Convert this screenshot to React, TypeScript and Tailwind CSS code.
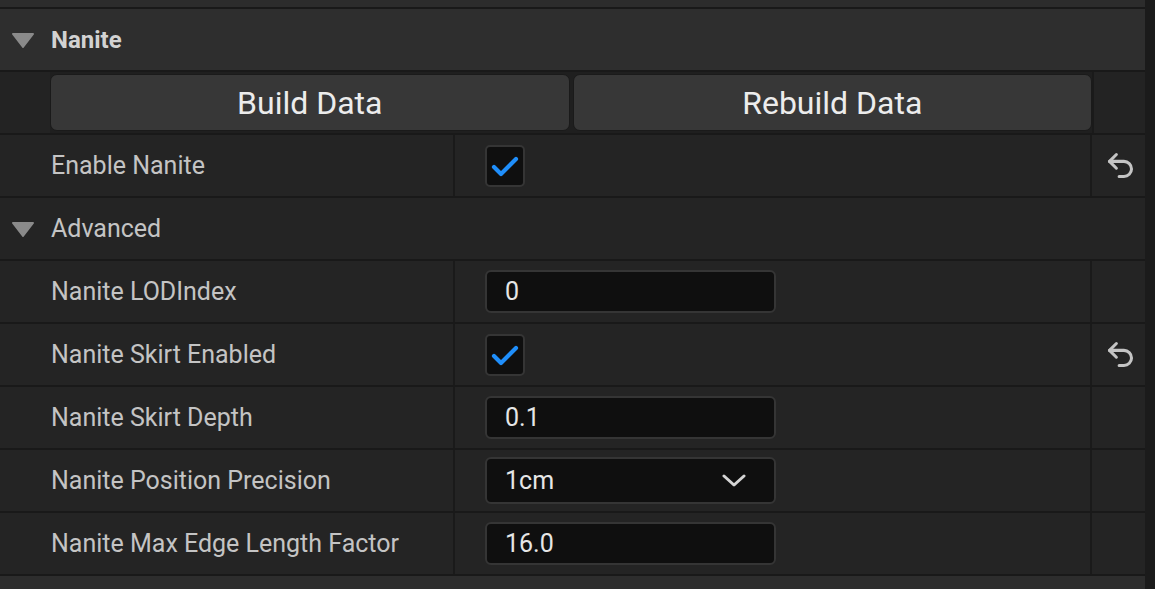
import React from 'react';
import { Undo2 } from 'lucide-react';

const font = { fontFamily: 'Roboto, "Noto Sans", sans-serif' };

const Caret = () => (
  <svg width="24" height="16" viewBox="0 0 24 16" className="shrink-0">
    <path d="M2 2 H22 L12 15 Z" fill="#8a8a8a" stroke="#8a8a8a" strokeWidth="2" strokeLinejoin="round" />
  </svg>
);

const CheckBox = () => (
  <div className="w-[40px] h-[42px] rounded-[5px] bg-[#0f0f0f] border-2 border-[#353535] flex items-center justify-center">
    <svg width="28" height="22" viewBox="0 0 28 22">
      <polyline points="3,12 10,19 25,4" fill="none" stroke="#1f8efa" strokeWidth="4.2" strokeLinecap="round" strokeLinejoin="round" />
    </svg>
  </div>
);

const NumberBox = ({ value }: { value: string }) => (
  <div className="w-[291px] h-[43px] rounded-[6px] bg-[#0f0f0f] border-2 border-[#353535] flex items-center pl-[18px] text-[25px] text-[#e6e6e6]">
    {value}
  </div>
);

const DropBox = ({ value }: { value: string }) => (
  <div className="w-[291px] h-[47px] rounded-[6px] bg-[#0f0f0f] border-2 border-[#353535] flex items-center justify-between pl-[18px] pr-[28px] text-[25px] text-[#e6e6e6]">
    <span>{value}</span>
    <svg width="24" height="13" viewBox="0 0 24 13">
      <polyline points="2,2 12,11 22,2" fill="none" stroke="#d4d4d4" strokeWidth="3" strokeLinecap="round" strokeLinejoin="round" />
    </svg>
  </div>
);

const Reset = () => <Undo2 size={33} strokeWidth={2.2} color="#c4c4c4" />;

const Row = ({ label, children, reset }: { label: string; children: React.ReactNode; reset?: boolean }) => (
  <div className="flex h-[63px] border-b-2 border-[#191919] bg-[#242424]">
    <div className="w-[455px] flex items-center pl-[51px] text-[25px] text-[#c4c4c4] border-r-2 border-[#1a1a1a]">
      {label}
    </div>
    <div className="w-[635px] flex items-center pl-[30px]">{children}</div>
    <div className="w-[55px] flex items-center justify-center border-l-2 border-[#1a1a1a] pl-[4px]">
      {reset && <Reset />}
    </div>
  </div>
);

const Category = ({ label, bold, bg }: { label: string; bold?: boolean; bg: string }) => (
  <div className={`flex items-center h-[63px] border-b-2 border-[#191919] pl-[11px] gap-[16px] ${bg}`}>
    <Caret />
    <span className={bold ? 'text-[24px] font-bold text-[#d2d2d2]' : 'text-[25px] text-[#c4c4c4]'}>{label}</span>
  </div>
);

export default function App() {
  return (
    <div className="w-[1155px] h-[589px] flex bg-[#1b1b1b] overflow-hidden" style={font}>
      <div className="w-[1145px] flex flex-col">
        <div className="h-[9px] shrink-0 bg-[#2c2c2c] border-b-2 border-[#191919]" />
        <Category label="Nanite" bold bg="bg-[#2e2e2e]" />

        {/* build buttons */}
        <div className="flex h-[63px] shrink-0 border-b-2 border-[#191919] bg-[#232323]">
          <div className="w-[50px]" />
          <div className="w-[1042px] flex gap-[3px] py-[2px] bg-[#1f1f1f]">
            <button className="flex-1 rounded-[7px] bg-[#373737] border border-[#1a1a1a] text-[32px] text-[#ececec]">
              Build Data
            </button>
            <button className="flex-1 rounded-[7px] bg-[#373737] border border-[#1a1a1a] text-[32px] text-[#ececec]">
              Rebuild Data
            </button>
          </div>
          <div className="w-[53px] bg-[#232323] border-l-2 border-[#1a1a1a]" />
        </div>

        <Row label="Enable Nanite" reset>
          <CheckBox />
        </Row>
        <Category label="Advanced" bg="bg-[#242424]" />
        <Row label="Nanite LODIndex">
          <NumberBox value="0" />
        </Row>
        <Row label="Nanite Skirt Enabled" reset>
          <CheckBox />
        </Row>
        <Row label="Nanite Skirt Depth">
          <NumberBox value="0.1" />
        </Row>
        <Row label="Nanite Position Precision">
          <DropBox value="1cm" />
        </Row>
        <Row label="Nanite Max Edge Length Factor">
          <NumberBox value="16.0" />
        </Row>
        <div className="flex-1 bg-[#2d2d2d]" />
      </div>
      <div className="flex-1 bg-[#1b1b1b]" />
    </div>
  );
}
